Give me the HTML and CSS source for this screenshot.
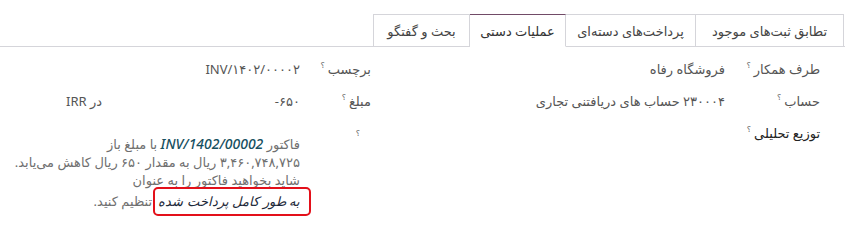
FILE: index.html
```html
<!DOCTYPE html>
<html lang="fa" dir="rtl">
<head>
<meta charset="utf-8">
<link rel="stylesheet" href="styles.css">
</head>
<body>
<div class="tabs">
  <div class="tab t1">تطابق ثبت‌های موجود</div>
  <div class="tab t2">پرداخت‌های دسته‌ای</div>
  <div class="tab t3 active">عملیات دستی</div>
  <div class="tab t4">بحث و گفتگو</div>
</div>
<div class="content">
  <div class="col col-right">
    <div class="row">
      <div class="label">طرف همکار<sup>؟</sup></div>
      <div class="value">فروشگاه رفاه</div>
    </div>
    <div class="row">
      <div class="label">حساب<sup>؟</sup></div>
      <div class="value">۲۳۰۰۰۴ حساب های دریافتنی تجاری</div>
    </div>
    <div class="row">
      <div class="label strong">توزیع تحلیلی<sup>؟</sup></div>
    </div>
  </div>
  <div class="col col-left">
    <div class="row">
      <div class="label">برچسب<sup>؟</sup></div>
      <div class="value">INV/۱۴۰۲/۰۰۰۰۲</div>
    </div>
    <div class="row">
      <div class="label">مبلغ<sup>؟</sup></div>
      <div class="value amount"><span>۶۵۰-</span><span class="cur">در IRR</span></div>
    </div>
    <div class="row note-row">
      <div class="label"><sup class="lone">؟</sup></div>
      <p class="note">فاکتور <span class="ref">INV/1402/00002</span> با مبلغ باز<br>۳,۴۶۰,۷۴۸,۷۲۵ ریال به مقدار ۶۵۰ ریال کاهش می‌یابد.<br>شاید بخواهید فاکتور را به عنوان<br><span class="hl">به طور کامل پرداخت شده</span> تنظیم کنید.</p>
    </div>
  </div>
</div>
</body>
</html>
```

FILE: styles.css
```css
html, body {
  margin: 0;
  padding: 0;
  background: #fff;
}
body {
  width: 845px;
  height: 246px;
  overflow: hidden;
  font-family: "Noto Sans", "DejaVu Sans", sans-serif;
  font-size: 13px;
  color: #4c4c4c;
}
.tabs {
  display: flex;
  padding-top: 14px;
  padding-right: 1px;
  border-bottom: 1px solid #d5d5da;
  height: 32px;
}
.tab {
  box-sizing: border-box;
  height: 33px;
  border: 1px solid #d5d5da;
  border-left: none;
  display: flex;
  align-items: center;
  justify-content: center;
  font-size: 13px;
  color: #444;
  background: #fff;
}
.tab.t4 { border-left: 1px solid #d5d5da; }
.t1 { width: 148px; }
.t2 { width: 130px; }
.t3 { width: 96px; }
.t4 { width: 97px; }
.tab.active {
  border-top: 1px solid #714b67;
  border-bottom-color: #fff;
  color: #333;
}
.content {
  display: flex;
}
.col {
  padding-top: 10px;
}
.col-right {
  width: 398px;
  padding-right: 25px;
}
.col-left {
  width: 371px;
  padding-right: 51px;
}
.row {
  display: flex;
  align-items: flex-start;
  min-height: 32px;
}
.label {
  line-height: 24px;
  color: #555;
  white-space: nowrap;
}
.col-right .label { width: 95px; }
.col-left .label { width: 71px; }
.label.strong { color: #222; font-weight: 500; }
sup {
  font-size: 8px;
  color: #6b6b6b;
  vertical-align: top;
  margin-right: 3px;
  position: relative;
  top: -4px;
}
sup.lone { margin-right: 11px; }
.value {
  line-height: 24px;
  color: #555;
}
.amount {
  display: flex;
  width: 234px;
  justify-content: space-between;
}
.note-row .label { padding-top: 4px; }
.note {
  margin: 14px 0 0;
  line-height: 18px;
  color: #707070;
  white-space: nowrap;
}
.ref {
  font-style: italic;
  color: #17505f;
  font-weight: 500;
  font-size: 14px;
}
.hl {
  display: inline-block;
  position: relative;
  padding: 3px 0;
  margin-left: 3px;
  font-style: italic;
  color: #1d2a3a;
  font-size: 13px;
}
.hl::after {
  content: "";
  position: absolute;
  top: -2px;
  bottom: -3px;
  right: -11px;
  left: -5px;
  border: 2px solid #e3101a;
  border-radius: 5px;
}
```
